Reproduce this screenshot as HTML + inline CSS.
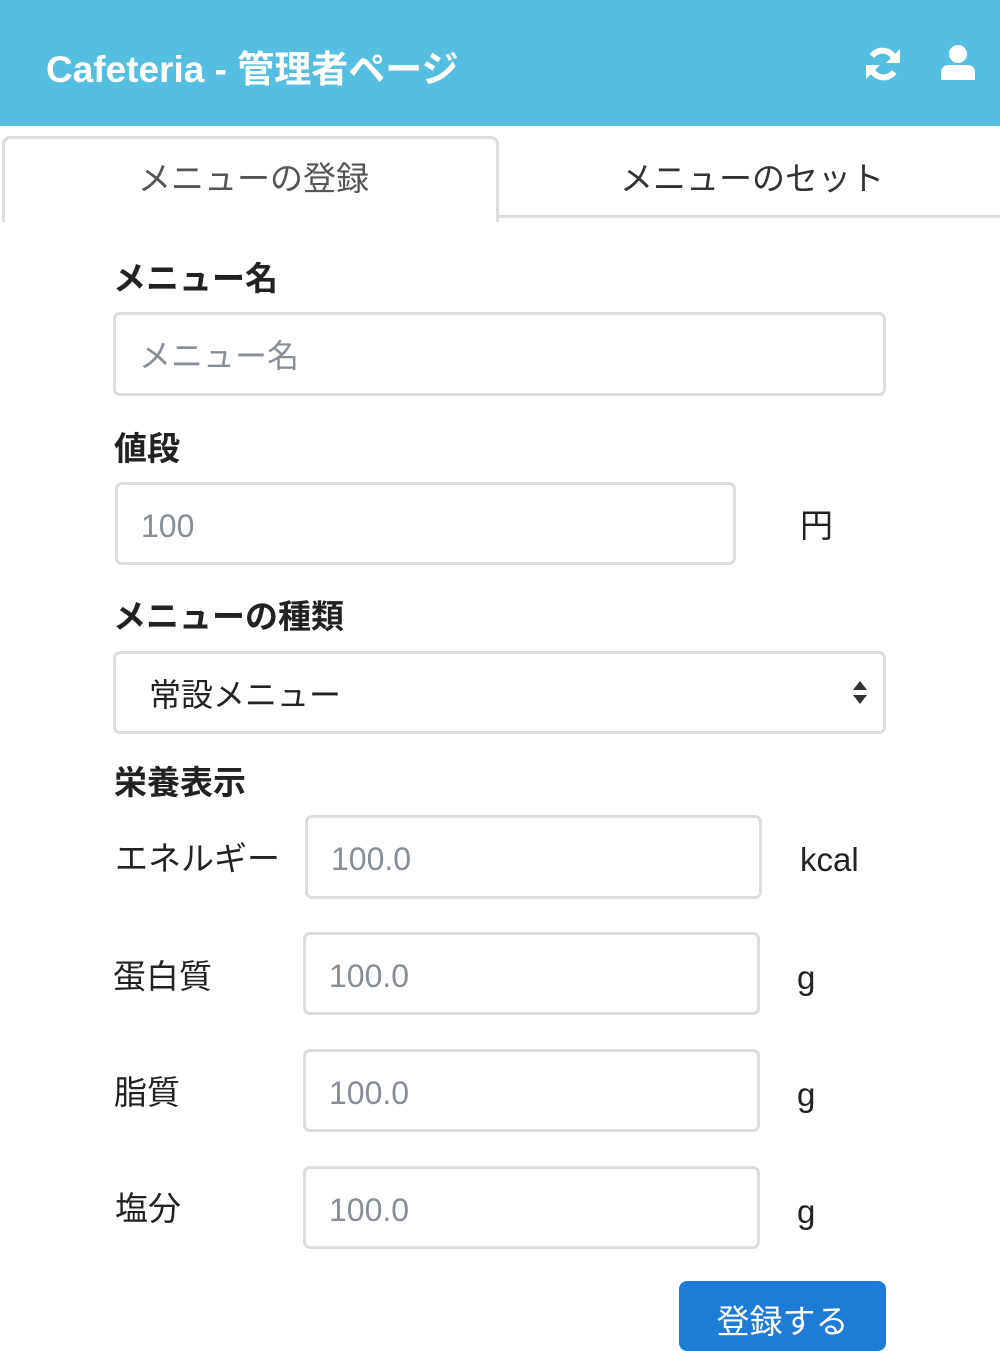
<!DOCTYPE html>
<html><head><meta charset="utf-8"><style>
*{box-sizing:border-box;margin:0;padding:0}
body{width:1000px;height:1334px;overflow:hidden;background:#fff;position:relative;font-family:"Liberation Sans","Noto Sans CJK JP",sans-serif;color:#333}
.a{position:absolute;white-space:nowrap}
.hdr{left:0;top:0;width:1000px;height:126px;background:#56bfe0}
.title{left:46px;top:47px;font-size:37px;font-weight:bold;color:#fff;line-height:46px}
.tab1{left:2px;top:136px;width:497px;height:86px;border:3px solid #ddd;border-bottom:none;border-radius:8px 8px 0 0;background:#fff}
.line{left:499px;top:215px;width:501px;height:3px;background:#ddd}
.tt{font-size:33px;line-height:42px;top:158px}
.lbl{font-size:33px;font-weight:bold;line-height:42px;color:#222}
.in{border:3px solid #ddd;border-radius:7px;background:#fff;font-size:32px;color:#868e96;line-height:42px;padding-left:23px;display:flex;align-items:center;padding-top:4px}
.txt{font-size:33px;line-height:42px;color:#222}
</style></head><body>
<div class="a hdr"></div>
<div class="a title">Cafeteria - 管理者ページ</div>
<svg class="a" style="left:864px;top:46px" width="38" height="36" viewBox="0 0 38 36"><path d="M31 14A13 13 0 0 0 8 10" fill="none" stroke="#fff" stroke-width="6"/><path d="M36 3V17H22z" fill="#fff"/><path d="M7 22A13 13 0 0 0 30 26" fill="none" stroke="#fff" stroke-width="6"/><path d="M2 33V19H16z" fill="#fff"/></svg>
<svg class="a" style="left:940px;top:44px" width="36" height="36" viewBox="0 0 36 36"><circle cx="18" cy="10" r="9" fill="#fff"/><path d="M1 36V29Q1 21 9 21H27Q35 21 35 29V36z" fill="#fff"/></svg>
<div class="a tab1"></div>
<div class="a line"></div>
<div class="a tt" style="left:138px;color:#555">メニューの登録</div>
<div class="a tt" style="left:620px;color:#333">メニューのセット</div>

<div class="a lbl" style="left:113px;top:258px">メニュー名</div>
<div class="a in" style="left:113px;top:312px;width:773px;height:84px">メニュー名</div>

<div class="a lbl" style="left:114px;top:428px">値段</div>
<div class="a in" style="left:115px;top:482px;width:621px;height:83px">100</div>
<div class="a txt" style="left:800px;top:505px">円</div>

<div class="a lbl" style="left:113px;top:596px">メニューの種類</div>
<div class="a in" style="left:113px;top:651px;width:773px;height:83px;color:#222;padding-left:33px">常設メニュー</div>
<svg class="a" style="left:852px;top:680px" width="16" height="26" viewBox="0 0 16 26"><path d="M1 10L8 1 15 10z M1 15L8 24 15 15z" fill="#333"/></svg>

<div class="a lbl" style="left:114px;top:762px">栄養表示</div>

<div class="a txt" style="left:115px;top:838px">エネルギー</div>
<div class="a in" style="left:305px;top:815px;width:457px;height:84px">100.0</div>
<div class="a txt" style="left:800px;top:839px">kcal</div>

<div class="a txt" style="left:113px;top:956px">蛋白質</div>
<div class="a in" style="left:303px;top:932px;width:457px;height:83px">100.0</div>
<div class="a txt" style="left:797px;top:957px">g</div>

<div class="a txt" style="left:114px;top:1072px">脂質</div>
<div class="a in" style="left:303px;top:1049px;width:457px;height:83px">100.0</div>
<div class="a txt" style="left:797px;top:1074px">g</div>

<div class="a txt" style="left:115px;top:1188px">塩分</div>
<div class="a in" style="left:303px;top:1166px;width:457px;height:83px">100.0</div>
<div class="a txt" style="left:797px;top:1191px">g</div>

<div class="a" style="left:679px;top:1281px;width:207px;height:70px;background:#1e7cd6;border-radius:8px;color:#fff;font-size:33px;line-height:42px;text-align:center;padding-top:20px">登録する</div>
</body></html>
